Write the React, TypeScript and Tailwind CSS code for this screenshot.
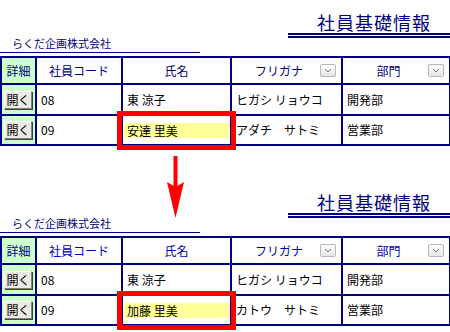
import React from "react";

const font = { fontFamily: '"Noto Sans CJK JP", "Noto Sans", sans-serif' };

const Dropdown = () => (
    <span className="w-[16px] h-[13px] mr-[5px] flex items-center justify-center rounded-[2px] border border-[#b8b8b8] bg-gradient-to-b from-white to-[#e6e6e6]">
        <svg width="8" height="5" viewBox="0 0 8 5" fill="none">
            <path d="M1 1l3 3 3-3" stroke="#707070" strokeWidth="1" />
        </svg>
    </span>
);

const OpenButton = () => (
    <button className="ml-[2px] w-[28px] h-[18px] flex items-center justify-center overflow-hidden bg-[#ece9e4] border border-t-white border-l-white border-r-[#808080] border-b-[#808080] shadow-[1px_1px_0_#404040] text-[12px] leading-none tracking-[-0.5px] text-black">
        開く
    </button>
);

type SectionProps = {
    name: string;
    kana: string;
    headColor: string;
};

const Section = ({ name, kana, headColor }: SectionProps) => {
    const head = "border-2 border-[#000080] text-[12px] font-normal " + headColor;
    const cell = "border-2 border-[#000080] text-[12px] text-black px-[4px]";
    return (
        <div className="relative h-[180px] flex flex-col">
            <div className="flex items-end h-[53px]">
                <div className="w-[200px] border-b border-[#000080] pl-[12px] pb-[2px] text-[11px] leading-[14px] text-[#000080]">
                    らくだ企画株式会社
                </div>
                <div className="ml-auto w-[162px] mb-[15px]">
                    <div className="pl-[29px] text-[18px] leading-[22px] tracking-[1px] text-[#000080]">社員基礎情報</div>
                    <div className="h-[5px] border-y-2 border-[#000080]" />
                </div>
            </div>
            <table className="mt-[3px] w-[450px] table-fixed border-collapse">
                <thead>
                    <tr className="h-[27px]">
                        <th className={head + " w-[35px] bg-[#ccffcc] !text-[#000080]"}>詳細</th>
                        <th className={head + " w-[86px]"}>社員コード</th>
                        <th className={head + " w-[109px]"}>氏名</th>
                        <th className={head + " w-[111px]"}>
                            <div className="flex items-center">
                                <span className="flex-1 text-center pl-[6px]">フリガナ</span>
                                <Dropdown />
                            </div>
                        </th>
                        <th className={head + " w-[108px]"}>
                            <div className="flex items-center">
                                <span className="flex-1 text-center pl-[6px]">部門</span>
                                <Dropdown />
                            </div>
                        </th>
                    </tr>
                </thead>
                <tbody>
                    <tr className="h-[31px]">
                        <td className="border-2 border-[#000080] bg-[#ccffcc] p-0"><OpenButton /></td>
                        <td className={cell}>08</td>
                        <td className={cell}>東 涼子</td>
                        <td className={cell}>ヒガシ リョウコ</td>
                        <td className={cell}>開発部</td>
                    </tr>
                    <tr className="h-[30px]">
                        <td className="border-2 border-[#000080] bg-[#ccffcc] p-0"><OpenButton /></td>
                        <td className={cell}>09</td>
                        <td className="border-2 border-[#000080] text-[12px] text-black px-[1px]">
                            <div className="bg-[#ffff99] h-[15px] leading-[15px] pl-[3px]">{name}</div>
                        </td>
                        <td className={cell}>{kana}</td>
                        <td className={cell}>営業部</td>
                    </tr>
                </tbody>
            </table>
            <div className="absolute left-[117px] top-[111px] w-[119px] h-[39px] border-[5px] border-[#ff0000]" />
        </div>
    );
};

export default function App() {
    return (
        <div className="relative w-[450px] h-[332px] overflow-hidden bg-white" style={font}>
            <Section name="安達 里美" kana="アダチ　サトミ" headColor="text-[#000080]" />
            <svg className="absolute left-[166px] top-[156px]" width="20" height="63" viewBox="0 0 20 63">
                <rect x="7.5" y="0" width="4" height="32" fill="#ff0000" />
                <polygon points="1,26 9.5,31 18,26 9.5,62" fill="#ff0000" />
            </svg>
            <Section name="加藤 里美" kana="カトウ　サトミ" headColor="text-[#0000b0]" />
        </div>
    );
}
